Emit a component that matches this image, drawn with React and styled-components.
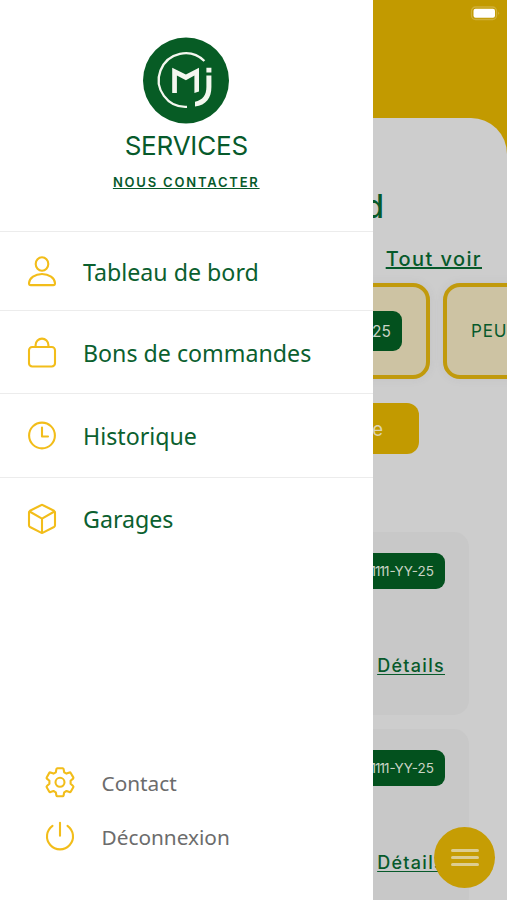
import React from 'react'

import styled, { createGlobalStyle } from 'styled-components'

const GlobalStyle = createGlobalStyle`
  * {
    box-sizing: border-box;
  }
  body {
    margin: 0;
    overflow: hidden;
  }
`
const Phone = styled.div`
  position: relative;
  width: 507px;
  height: 900px;
  overflow: hidden;
  background: #c29a00;
  font-family: Inter, "Liberation Sans", sans-serif;
  color: #075a2b;
`
const StatusBar = styled.header`
  display: flex;
  justify-content: flex-end;
  height: 118px;
  padding: 6px 6px 0 0;
`
const Sheet = styled.main`
  display: flex;
  flex-direction: column;
  height: 782px;
  padding-top: 68px;
  background: #cdcdcd;
  border-radius: 36px 36px 0 0;
`
const Title = styled.h1`
  margin: 0;
  padding-right: 123px;
  font-size: 32px;
  line-height: 42px;
  font-weight: 500;
  text-align: right;
`
const SeeAll = styled.a`
  align-self: flex-end;
  margin: 17px 25px 0 0;
  font-size: 20px;
  line-height: 28px;
  font-weight: 500;
  letter-spacing: 1.4px;
  text-decoration: underline;
  text-decoration-thickness: 1.5px;
  text-underline-offset: 1px;
  text-decoration-skip-ink: none;
`
const Carousel = styled.div`
  display: flex;
  gap: 13px;
  margin-top: 10px;
  padding-left: 113px;
`
const CarCard = styled.div`
  display: flex;
  flex: none;
  align-items: center;
  justify-content: ${({ $end }) => ($end ? 'flex-end' : 'flex-start')};
  width: 317px;
  height: 96px;
  padding: 0 24px;
  background: #cdc3a3;
  border: 4px solid #c19a0c;
  border-radius: 17px;
  font-size: 17px;
  letter-spacing: 0.8px;
  box-shadow: 0 0 8px rgba(120, 120, 140, 0.12);
`
const Plate = styled.span`
  display: flex;
  align-items: center;
  justify-content: flex-end;
  width: 160px;
  height: ${({ $tall }) => ($tall ? '40px' : '36px')};
  padding-right: 11px;
  border-radius: 9px;
  background: #03511e;
  color: #c9d3c5;
  font-size: ${({ $tall }) => ($tall ? '15.5px' : '13.5px')};
  letter-spacing: 0;
`
const PlateNumber = styled.span`
  letter-spacing: -1px;
  margin-right: 1px;
`
const AddButton = styled.button`
  flex: none;
  width: 331px;
  height: 51px;
  margin: 24px 0 0 88px;
  padding: 0 36px;
  border: 0;
  border-radius: 12px;
  background: #c29a00;
  color: #ddd4b4;
  font-family: inherit;
  font-size: 18.5px;
  text-align: right;
`
const OrderList = styled.section`
  display: flex;
  flex-direction: column;
  gap: 14px;
  margin-top: 78px;
  padding: 0 38px;
`
const OrderCard = styled.article`
  display: flex;
  flex: none;
  flex-direction: column;
  align-items: flex-end;
  justify-content: space-between;
  height: 183px;
  padding: 21px 24px 36px;
  border-radius: 15px;
  background: #c8c8c8;
`
const Details = styled.a`
  font-size: 18px;
  line-height: 26px;
  font-weight: 500;
  letter-spacing: 1.3px;
  text-decoration: underline;
  text-decoration-thickness: 1.3px;
  text-underline-offset: 2px;
  text-decoration-skip-ink: none;
`
const MenuButton = styled.button`
  position: absolute;
  right: 12px;
  bottom: 12px;
  display: flex;
  flex-direction: column;
  align-items: center;
  justify-content: center;
  gap: 4px;
  width: 61px;
  height: 61px;
  padding: 0;
  border: 0;
  border-radius: 50%;
  background: #c69d04;
`
const MenuLine = styled.span`
  width: 28px;
  height: 3px;
  border-radius: 2px;
  background: #dccd91;
`
const Drawer = styled.aside`
  position: absolute;
  top: 0;
  left: 0;
  display: flex;
  flex-direction: column;
  width: 372.5px;
  height: 900px;
  background: #fff;
`
const Brand = styled.div`
  display: flex;
  flex-direction: column;
  align-items: center;
  height: 231px;
  padding-top: 37px;
`
const BrandName = styled.div`
  margin-top: 6px;
  font-size: 26px;
  line-height: 32px;
  letter-spacing: -0.2px;
`
const ContactUs = styled.a`
  margin-top: 9px;
  font-size: 13px;
  line-height: 22px;
  font-weight: 600;
  letter-spacing: 1.8px;
  text-decoration: underline;
  text-decoration-thickness: 1px;
  text-underline-offset: 1px;
`
const MenuItem = styled.a`
  display: flex;
  align-items: center;
  gap: 26px;
  height: ${({ $height }) => $height}px;
  padding: 2px 0 0 27px;
  border-top: 1.5px solid #ececec;
  font-family: "Noto Sans", sans-serif;
  font-size: 23.2px;
  line-height: 32px;
  color: #0b602f;
`
const Footer = styled.nav`
  display: flex;
  flex-direction: column;
  gap: 24px;
  margin-top: auto;
  padding: 0 0 48px 45px;
`
const FooterItem = styled.a`
  display: flex;
  align-items: center;
  gap: 26.5px;
  height: 30px;
  font-family: "Noto Sans", sans-serif;
  font-size: 20.8px;
  line-height: 30px;
  color: #6c6c6c;
`
const Icon = styled.svg`
  flex: none;
  width: 30px;
  height: 30px;
  overflow: visible;
  fill: none;
  stroke: #f2bd1a;
  stroke-width: 2.1;
  stroke-linecap: round;
  stroke-linejoin: round;
`

const Battery = () => (
  <svg width="32" height="15" viewBox="0 0 32 15">
    <rect x="2.5" y="1" width="25" height="12.5" rx="4" fill="none" stroke="#cfb038" strokeWidth="1.3" />
    <rect x="4.5" y="2.8" width="21.5" height="9" rx="2" fill="#fff" />
    <path d="M29.5 5.5q1.4 1.7 0 3.5z" fill="#d9c068" />
  </svg>
)

const Logo = () => (
  <svg width="86" height="87" viewBox="0 0 86 87">
    <circle cx="43" cy="43.5" r="43" fill="#075c25" />
    <path d="M61.4 24A26.8 26.8 0 1 0 44 69.8" fill="none" stroke="#f4f7ef" strokeWidth="2.3" />
    <path d="M29.2 30.7L42.9 37.6L56 30.7V54.5L51.4 56V38.6L42.9 43.2L33.9 38.6V56H29.2z" fill="#f4f7ef" />
    <path d="M63.4 30.7h5v4.8h-5zM63.4 38.4h5V50c0 11-5 18-16.4 19.600v-4.900c7.800-1.700 11.400-6.700 11.400-14.700z" fill="#f4f7ef" />
  </svg>
)

const User = () => (
  <Icon viewBox="0 0 30 30">
    <ellipse cx="15" cy="7" rx="6.3" ry="6.7" />
    <path d="M15 17c7 0 12.8 4.2 13 9.2 0 1.3-.6 1.9-1.8 1.9H3.8c-1.2 0-1.8-.6-1.8-1.9.3-5 6-9.2 13-9.2z" />
  </Icon>
)

const Bag = () => (
  <Icon viewBox="0 0 30 30">
    <rect x="2" y="9" width="26" height="19.5" rx="3.2" />
    <path d="M8.6 9V7a6.4 6.4 0 0 1 12.8 0v2" />
  </Icon>
)

const Clock = () => (
  <Icon viewBox="0 0 30 30">
    <circle cx="15" cy="14.5" r="12.9" />
    <path d="M15 6.5v9h6" />
  </Icon>
)

const Box = () => (
  <Icon viewBox="0 0 30 30">
    <path d="M14 1.2q1-.6 2 0l11 5.6q1 .6 1 1.8v12.6q0 1.2-1 1.8l-11 5.6q-1 .6-2 0L3 23q-1-.6-1-1.8V8.6q0-1.2 1-1.8z" />
    <path d="M2.6 7.5L15 14.6l12.4-7.1M15 14.6v14" />
  </Icon>
)

const Gear = () => (
  <Icon viewBox="0 .7 30 30">
    <path d="M12.3 1h5.4q.7 0 .9.800l.6 3.200 2.300 1.300 3-1.100q.8-.3 1.200.4l2.600 4.500q.4.700-.2 1.200L25.600 13.500v3l2.500 2.200q.6.500.2 1.200l-2.600 4.500q-.4.700-1.200.4l-3-1.100-2.300 1.300-.6 3.200q-.2.800-.9.800h-5.400q-.7 0-.9-.8L10.800 25l-2.300-1.300-3 1.100q-.8.300-1.200-.4l-2.600-4.500q-.4-.7.200-1.200l2.500-2.200v-3L1.900 11.300q-.6-.5-.2-1.200l2.600-4.500q.4-.7 1.200-.4l3 1.100L10.800 5l.6-3.200q.2-.8.900-.8z" />
    <circle cx="15" cy="15" r="4.5" />
  </Icon>
)

const Power = () => (
  <Icon viewBox="0 .7 30 30">
    <path d="M7.5 4.5a13 13 0 1 0 15 0M15 1.5v13" />
  </Icon>
)

const menu = [
  { label: 'Tableau de bord', icon: User, height: 79 },
  { label: 'Bons de commandes', icon: Bag, height: 83 },
  { label: 'Historique', icon: Clock, height: 83.5 },
  { label: 'Garages', icon: Box, height: 81 }
]

const orders = [
  { id: 1, number: '1111', suffix: '-YY-25' },
  { id: 2, number: '1111', suffix: '-YY-25' }
]

const App = () => {
  return (
    <Phone>
      <GlobalStyle />
      <StatusBar><Battery /></StatusBar>
      <Sheet>
        <Title>Tableau de bord</Title>
        <SeeAll>Tout voir</SeeAll>
        <Carousel>
          <CarCard $end><Plate $tall>1111-YY-25</Plate></CarCard>
          <CarCard>PEU</CarCard>
        </Carousel>
        <AddButton>Nouvelle commande</AddButton>
        <OrderList>
          {orders.map(({ id, number, suffix }) => (
            <OrderCard key={id}>
              <Plate><PlateNumber>{number}</PlateNumber>{suffix}</Plate>
              <Details>Détails</Details>
            </OrderCard>
          ))}
        </OrderList>
      </Sheet>
      <MenuButton aria-label="Menu"><MenuLine /><MenuLine /><MenuLine /></MenuButton>
      <Drawer>
        <Brand>
          <Logo />
          <BrandName>SERVICES</BrandName>
          <ContactUs>NOUS CONTACTER</ContactUs>
        </Brand>
        {menu.map(({ label, icon: ItemIcon, height }) => (
          <MenuItem key={label} $height={height}><ItemIcon />{label}</MenuItem>
        ))}
        <Footer>
          <FooterItem><Gear />Contact</FooterItem>
          <FooterItem><Power />Déconnexion</FooterItem>
        </Footer>
      </Drawer>
    </Phone>
  )
}

export default App
